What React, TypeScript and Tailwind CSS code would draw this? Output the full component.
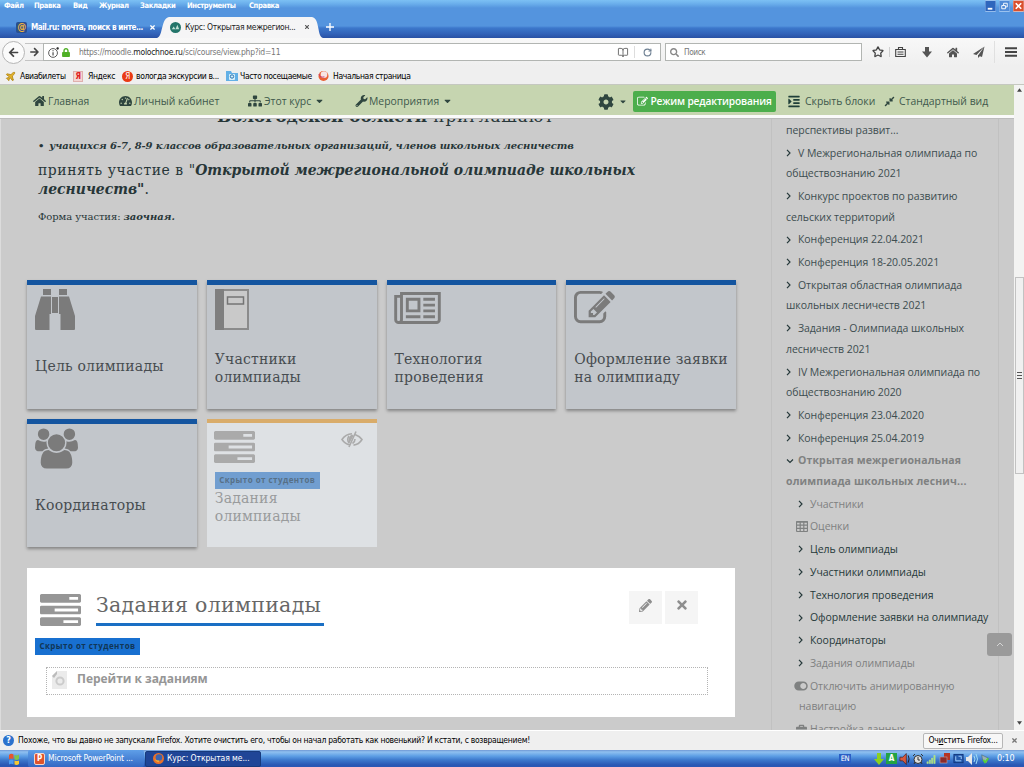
import React from 'react';
import { FaHome, FaTachometerAlt, FaSitemap, FaWrench, FaCog, FaIndent, FaCompressAlt, FaLock, FaArrowLeft, FaArrowRight, FaSearch, FaToggleOn, FaPencilAlt, FaTimes, FaCaretDown, FaBriefcase } from 'react-icons/fa';
import { Star, BookOpen, RotateCw, Plane } from 'lucide-react';

interface IconProps {
  className?: string;
}

interface Course {
  lines: string[];
}

interface Section {
  title: string;
  muted?: boolean;
}

const EDIT_PATH =
  'M888 1184l116-116-152-152-116 116v56h96v96h56zm440-720q-16-16-33 1l-350 350q-17 17-1 33t33-1l350-350q17-17 1-33zm80 594v190q0 119-84.5 203.5t-203.5 84.5h-832q-119 0-203.5-84.5t-84.5-203.5v-832q0-119 84.5-203.5t203.5-84.5h832q63 0 117 25 15 7 18 23 3 17-9 29l-49 49q-14 14-32 8-23-6-45-6h-832q-66 0-113 47t-47 113v832q0 66 47 113t113 47h832q66 0 113-47t47-113v-126q0-13 9-22l64-64q15-15 35-7t20 29zm-96-738l288 288-672 672h-288v-288zm444 132l-92 92-288-288 92-92q28-28 68-28t68 28l152 152q28 28 28 68t-28 68z';

const EditIcon: React.FC<IconProps> = ({ className }) => (
  <svg viewBox="0 0 1792 1792" fill="currentColor" className={className}>
    <path d={EDIT_PATH} />
  </svg>
);

const TasksIcon: React.FC<IconProps> = ({ className }) => (
  <svg viewBox="0 128 1792 1408" preserveAspectRatio="none" fill="currentColor" className={className}>
    <path d="M1024 1408h640v-128h-640v128zm-384-512h1024v-128h-1024v128zm640-512h384v-128h-384v128zm512 832v256q0 26-19 45t-45 19h-1664q-26 0-45-19t-19-45v-256q0-26 19-45t45-19h1664q26 0 45 19t19 45zm0-512v256q0 26-19 45t-45 19h-1664q-26 0-45-19t-19-45v-256q0-26 19-45t45-19h1664q26 0 45 19t19 45zm0-512v256q0 26-19 45t-45 19h-1664q-26 0-45-19t-19-45v-256q0-26 19-45t45-19h1664q26 0 45 19t19 45z" />
  </svg>
);

const UsersIcon: React.FC<IconProps> = ({ className }) => (
  <svg viewBox="-64 0 1920 1792" fill="currentColor" className={className}>
    <path d="M529 896q-162 5-265 128h-134q-82 0-138-40.500t-56-118.500q0-353 124-353 6 0 43.500 21t97.500 42.500 119 21.500q67 0 133-23-5 37-5 66 0 139 81 256zm1071 637q0 120-73 189.500t-194 69.500h-874q-121 0-194-69.500t-73-189.500q0-53 3.500-103.500t14-109 26.500-108.500 43-97.500 62-81 85.500-53.500 111.500-20q10 0 43 21.500t73 48 107 48 135 21.500 135-21.500 107-48 73-48 43-21.500q61 0 111.500 20t85.500 53.500 62 81 43 97.500 26.500 108.500 14 109 3.500 103.500zm-1024-1277q0 106-75 181t-181 75-181-75-75-181 75-181 181-75 181 75 75 181zm704 384q0 159-112.500 271.500t-271.500 112.500-271.500-112.500-112.500-271.500 112.500-271.500 271.500-112.500 271.500 112.500 112.500 271.500zm576 225q0 78-56 118.500t-138 40.500h-134q-103-123-265-128 81-117 81-256 0-29-5-66 66 23 133 23 59 0 119-21.500t97.500-42.500 43.500-21q124 0 124 353zm-128-609q0 106-75 181t-181 75-181-75-75-181 75-181 181-75 181 75 75 181z" />
  </svg>
);

const NewspaperIcon: React.FC<IconProps> = ({ className }) => (
  <svg viewBox="0 128 2048 1408" fill="currentColor" className={className}>
    <path d="M1024 512h-384v384h384v-384zm128 640v128h-640v-128h640zm0-768v640h-640v-640h640zm640 768v128h-512v-128h512zm0-256v128h-512v-128h512zm0-256v128h-512v-128h512zm0-256v128h-512v-128h512zm-1536 960v-960h-128v960q0 26 19 45t45 19 45-19 19-45zm1664 0v-1088h-1536v1088q0 33-11 64h1483q26 0 45-19t19-45zm128-1216v1216q0 80-56 136t-136 56h-1664q-80 0-136-56t-56-136v-1088h256v-128h1792z" />
  </svg>
);

const BinocularsIcon: React.FC<IconProps> = ({ className }) => (
  <svg viewBox="0 0 40 41" fill="currentColor" className={className}>
    <path d="M8 0h8v6H8zM24 0h8v6h-8zM17 8h6v16h-6zM6 7.500h10V25h-1.500v16H1q-1 0-1-1V27zM34 7.500H24V25h1.500v16H39q1 0 1-1V27z" />
  </svg>
);

const BookIcon: React.FC<IconProps> = ({ className }) => (
  <svg viewBox="0 0 34 41" className={className}>
    <rect x="1" y="1" width="32" height="39" fill="#c9c9c9" stroke="#8b8b8b" strokeWidth="2" />
    <path d="M0 0h9v41H0z" fill="#7f7f7f" />
    <rect x="12.500" y="8" width="16" height="7" fill="none" stroke="#747474" strokeWidth="1.500" />
  </svg>
);

const EyeSlashIcon: React.FC<IconProps> = ({ className }) => (
  <svg viewBox="0 0 22 17" fill="none" stroke="currentColor" strokeWidth="1.600" className={className}>
    <path d="M9 14Q4 13 1 8.500 4.500 3 11 2.700M14 3.500q4.500 1.500 7 5-3 5-8.500 5.600M8 12Q5.500 8.500 8 5M14 8q0 3-2.500 4.500M15 .5L8 16" />
    <path d="M11 4.500Q8 6 8.500 10.500L11.500 5z" fill="currentColor" />
  </svg>
);

const TableIcon: React.FC<IconProps> = ({ className }) => (
  <svg viewBox="0 0 12 11" fill="none" stroke="currentColor" strokeWidth="1.200" className={className}>
    <rect x=".5" y=".5" width="11" height="10" rx="1" />
    <path d="M0 1.200h12M0 4.200h12M0 7.300h12M4.200 1v10M7.800 1v10" />
  </svg>
);

const MENU = [
  { label: 'Файл', width: 'w-[30px]' },
  { label: 'Правка', width: 'w-[39px]' },
  { label: 'Вид', width: 'w-[26px]' },
  { label: 'Журнал', width: 'w-[41px]' },
  { label: 'Закладки', width: 'w-[47px]' },
  { label: 'Инструменты', width: 'w-[62px]' },
  { label: 'Справка', width: 'w-[40px]' },
];

const COURSES: Course[] = [
  { lines: ['V Межрегиональная олимпиада по', 'обществознанию 2021'] },
  { lines: ['Конкурс проектов по развитию', 'сельских территорий'] },
  { lines: ['Конференция 22.04.2021'] },
  { lines: ['Конференция 18-20.05.2021'] },
  { lines: ['Открытая областная олимпиада', 'школьных лесничеств 2021'] },
  { lines: ['Задания - Олимпиада школьных', 'лесничеств 2021'] },
  { lines: ['IV Межрегиональная олимпиада по', 'обществознанию 2020'] },
  { lines: ['Конференция 23.04.2020'] },
  { lines: ['Конференция 25.04.2019'] },
];

const SECTIONS: Section[] = [
  { title: 'Цель олимпиады' },
  { title: 'Участники олимпиады' },
  { title: 'Технология проведения' },
  { title: 'Оформление заявки на олимпиаду' },
  { title: 'Координаторы' },
  { title: 'Задания олимпиады', muted: true },
];

const Chevron: React.FC<{ down?: boolean }> = ({ down }) => (
  <svg viewBox="0 0 8 8" fill="none" stroke="#26393a" strokeWidth="1.200" className="w-[8px] h-[8px] shrink-0">
    {down ? <path d="M1 2.500l3 3 3-3" /> : <path d="M1 .8l3 3.200-3 3.200" />}
  </svg>
);

const BrowserChrome: React.FC = () => (
  <header className="font-['DejaVu_Sans_Condensed','DejaVu_Sans',sans-serif] text-[8.5px] tracking-[-0.25px]">
    <div className="h-[38px] bg-[linear-gradient(#7cc0f4_0px,#69adeb_4px,#5494de_8px,#5494de_26px,#3c77cb_28px,#3262b8_34px,#2951a4_38px)] flex flex-col">
      <div className="h-[16px] flex justify-between">
        <div className="flex pl-[4px] h-[12px] items-center text-white font-bold text-[7.6px] tracking-[-0.4px]">
          {MENU.map(item => (
            <span key={item.label} className={`${item.width} whitespace-nowrap`}>{item.label}</span>
          ))}
        </div>
        <div className="flex gap-[3px] h-[12px] text-white">
          <svg viewBox="0 0 12 12" className="w-[11px] h-[12px]"><rect width="12" height="12" rx="1" fill="#2e66bd" stroke="#b7d4f7" strokeWidth=".8" /><path d="M3 9h5" stroke="#fff" strokeWidth="2" /></svg>
          <svg viewBox="0 0 12 12" className="w-[11px] h-[12px]" fill="none" stroke="#fff"><rect width="12" height="12" rx="1" fill="#4e89d6" stroke="#b7d4f7" strokeWidth=".8" /><path d="M5 5V3h4v4H7M3 5.500h4V9H3z" /></svg>
          <svg viewBox="0 0 12 12" className="w-[11px] h-[12px]"><rect width="12" height="12" rx="1" fill="#d9502f" stroke="#f3cabd" strokeWidth=".8" /><path d="M3 3l6 6M9 3L3 9" stroke="#fff" strokeWidth="1.800" /></svg>
        </div>
      </div>
      <div className="h-[22px] flex">
        <div className="w-[157px] flex items-center pl-[16px] text-white font-bold">
          <span className="w-[11px] h-[11px] rounded-[2px] bg-[#2a4f8f] text-[#f0b23d] text-[10px] leading-[10px] text-center shrink-0">@</span>
          <span className="ml-[4px] w-[118px] text-[8.1px] tracking-[-0.43px] whitespace-nowrap">Mail.ru: почта, поиск в инте...</span>
          <FaTimes className="w-[7px] h-[7px] shrink-0" />
        </div>
        <div className="relative w-[166px] h-full">
          <svg viewBox="0 0 166 22" className="absolute inset-0 w-full h-full"><path d="M0 22C6 21 4 2 12 1h143c8 1 5 20 11 21z" fill="#f5f5f6" /></svg>
          <div className="relative h-full flex items-center pl-[13px] text-[#222]">
            <svg viewBox="0 0 12 12" className="w-[11px] h-[11px] shrink-0"><circle cx="6" cy="6" r="6" fill="#23756a" /><path d="M2 8l2-3 2 3 2-5 2 5z" fill="#bfe0d5" /></svg>
            <span className="ml-[4px] w-[119px] whitespace-nowrap tracking-[-0.32px]">Курс: Открытая межрегион...</span>
            <FaTimes className="w-[6px] h-[6px] text-[#555]" />
          </div>
        </div>
        <svg viewBox="0 0 9 9" className="w-[8px] h-[8px] ml-[3px] mt-[7px]"><path d="M4.500 0v9M0 4.500h9" stroke="#fff" strokeWidth="1.500" /></svg>
      </div>
    </div>

    <div className="h-[28px] bg-gradient-to-b from-[#f8f8f8] to-[#efefef] flex items-center text-[#444]">
      <div className="w-[23px] h-[23px] ml-[2px] rounded-full border border-[#b5b5b5] bg-[#fbfbfb] flex items-center justify-center shrink-0">
        <FaArrowLeft className="w-[11px] h-[11px]" />
      </div>
      <div className="w-[18px] h-[18px] border-y border-[#c4c4c4] flex items-center justify-center"><FaArrowRight className="w-[9px] h-[10px]" /></div>
      <div className="h-[18px] w-[618px] bg-white border border-[#b2b5b2] flex items-center">
        <svg viewBox="0 0 12 12" className="w-[11px] h-[11px] ml-[4px]" fill="none" stroke="#4b4b4b"><circle cx="5.500" cy="6.500" r="4.800" /><path d="M5.500 5.800v3.500M5.500 3.500v1" strokeWidth="1.300" /><circle cx="10.500" cy="1.500" r="1" fill="#222" /></svg>
        <FaLock className="w-[8px] h-[9px] ml-[3px] text-[#4faf25]" />
        <span className="ml-[9px] w-[538px] text-[8.5px] tracking-[-0.27px] text-[#777] whitespace-nowrap">https://moodle.<span className="text-[#222]">molochnoe.ru</span>/sci/course/view.php?id=11</span>
        <BookOpen className="w-[12px] h-[11px] text-[#666]" strokeWidth={2} />
        <span className="h-[12px] w-px bg-[#ddd] ml-[5px] mr-[8px]" />
        <RotateCw className="w-[9px] h-[9px] text-[#6d7f92]" strokeWidth={3} />
      </div>
      <div className="h-[18px] w-[197px] ml-[4px] bg-white border border-[#b2b5b2] flex items-center">
        <FaSearch className="w-[9px] h-[9px] ml-[4px] text-[#888]" />
        <span className="ml-[5px] text-[#777] text-[8.2px] tracking-[-0.4px]">Поиск</span>
      </div>
      <Star className="w-[12px] h-[12px] ml-[10px] shrink-0" strokeWidth={2.6} />
      <span className="h-[10px] w-px bg-[#d0d0d0] ml-[5px] mr-[5px]" />
      <svg viewBox="0 0 11 12" className="w-[11px] h-[12px]" fill="none" stroke="#444" strokeWidth="1.100"><path d="M.7 3.500h9.600v7H.7zM3.500 3V1.500h4V3M2.500 6h6M2.500 8.200h6" /></svg>
      <svg viewBox="0 0 10 12" className="w-[10px] h-[12px] ml-[16px]" fill="#555"><path d="M3 1h4v4.500h3l-5 6-5-6h3z" /></svg>
      <FaHome className="w-[12px] h-[11px] ml-[15px] text-[#555]" />
      <svg viewBox="0 0 12 12" className="w-[12px] h-[12px] ml-[14px]"><path d="M11.500.5L0 8l3.500 1zM11.500.5L5 9.500l4 1.500zM5 9v3l2-2z" fill="#555" /></svg>
      <span className="h-[22px] w-px bg-[#e0e0e0] ml-[9px]" />
      <svg viewBox="0 0 12 10" className="w-[12px] h-[10px] ml-[10px]"><path d="M0 1.200h12M0 5h12M0 8.800h12" stroke="#444" strokeWidth="2" /></svg>
    </div>

    <div className="h-[19px] bg-[#efefef] border-b border-[#c5c8c0] flex items-center pt-[2px] text-black whitespace-nowrap tracking-[-0.35px]">
      <Plane className="w-[11px] h-[11px] ml-[5px] text-[#b48a1c] fill-[#e3b22a]" />
      <span className="ml-[4px] w-[53px]">Авиабилеты</span>
      <span className="w-[10px] h-[11px] bg-[#f3d5d3] border border-[#dfb0ad] text-[#e02020] font-bold text-[8px] leading-[9px] text-center">Я</span>
      <span className="ml-[5px] w-[34px]">Яндекс</span>
      <span className="w-[11px] h-[11px] rounded-full bg-[#ea3a14] text-white text-[8px] leading-[11px] text-center">Я</span>
      <span className="ml-[3px] w-[90px]">вологда экскурсии в...</span>
      <svg viewBox="0 0 12 12" className="w-[12px] h-[12px]"><path d="M0 1h5l1 2h6v8H0z" fill="#63b0e6" /><rect x="3" y="4" width="6" height="6" rx="1" fill="#d8effb" /><circle cx="6" cy="6.500" r="1.700" fill="none" stroke="#2571ae" /></svg>
      <span className="ml-[2px] w-[78px]">Часто посещаемые</span>
      <svg viewBox="0 0 12 12" className="w-[11px] h-[12px]"><circle cx="6" cy="6" r="5.500" fill="#ea5f33" /><circle cx="6.500" cy="4.500" r="3.600" fill="#f7e4e4" /><path d="M1 4q1 4 6 3" stroke="#c23770" fill="none" /></svg>
      <span className="ml-[4px]">Начальная страница</span>
    </div>
  </header>
);

const GreenNav: React.FC = () => (
  <nav className="h-[30px] bg-[#c6d5b0] flex items-center pl-[33px] pt-[3px] text-[#40584c] text-[10.400px] tracking-[0px] whitespace-nowrap">
    <a className="w-[86px] flex items-center gap-[2px]"><FaHome className="w-[13px] h-[12px] text-[#2f463f]" />Главная</a>
    <a className="w-[129px] flex items-center gap-[2px]"><FaTachometerAlt className="w-[13px] h-[12px] text-[#2f463f]" />Личный кабинет</a>
    <a className="w-[107px] flex items-center gap-[2px]"><FaSitemap className="w-[14px] h-[12px] text-[#2f463f]" />Этот курс<FaCaretDown className="w-[9px] h-[10px] ml-[2px] text-[#2f463f]" /></a>
    <a className="w-[243px] flex items-center gap-[1px]"><FaWrench className="w-[13px] h-[12px] text-[#2f463f]" />Мероприятия<FaCaretDown className="w-[9px] h-[10px] ml-[3px] text-[#2f463f]" /></a>
    <a className="w-[35px] flex items-center"><FaCog className="w-[16px] h-[16px] text-[#2f463f]" /><FaCaretDown className="w-[8px] h-[9px] ml-[5px] text-[#2f463f]" /></a>
    <button className="w-[143px] h-[21px] bg-[#4cae4c] rounded-[2px] text-white font-semibold text-[10.2px] flex items-center justify-center gap-[2px] tracking-[-0.15px]">
      <EditIcon className="w-[11px] h-[11px]" />Режим редактирования
    </button>
    <a className="ml-[11px] w-[97px] flex items-center gap-[4px]"><FaIndent className="w-[14px] h-[13px] text-[#1f3f39]" />Скрыть блоки</a>
    <a className="flex items-center gap-[4px]"><FaCompressAlt className="w-[11px] h-[11px] text-[#2f463f]" />Стандартный вид</a>
  </nav>
);

interface TileProps {
  title: string[];
  icon: React.ReactNode;
}

const Tile: React.FC<TileProps> = ({ title, icon }) => (
  <div className="h-[128.500px] bg-[#c2c6cb] border-t-[5px] border-[#1455a0] shadow-[0_2px_3px_rgba(0,0,0,0.35)] pl-[8px] pt-[4px] text-[#7b7b7b]">
    <div className="h-[61px] flow-root">{icon}</div>
    <h4 className={`font-['DejaVu_Serif',serif] text-[14px] leading-[18px] tracking-[0.2px] text-[#474c50] whitespace-nowrap ${title.length === 1 ? 'pt-[7px]' : ''}`}>
      {title.map(line => <span key={line} className="block">{line}</span>)}
    </h4>
  </div>
);

const HiddenBadge: React.FC<{ faded?: boolean }> = ({ faded }) => (
  <div className={`w-[105px] h-[17px] flex items-center justify-center font-bold text-[8px] tracking-[0.45px] whitespace-nowrap ${faded ? 'bg-[#719ed0] text-[#577087]' : 'bg-[#1870d0] text-[#113656]'}`}>
    Скрыто от студентов
  </div>
);

const MainColumn: React.FC = () => (
  <main className="w-[771px] shrink-0 pl-[26px] border-l border-l-[#dcdcdc] overflow-hidden">
    <section className="pl-[11px] h-[161px] font-['DejaVu_Serif',serif] text-[#273638] whitespace-nowrap overflow-hidden">
      <p className="text-[16.800px] leading-[20px] mt-[-13px] ml-[179px] tracking-[0.9px]"><b className="tracking-[-0.05px]">Вологодской области</b> приглашают</p>
      <p className="mt-[12px] text-[10px] leading-[16px] tracking-[-0.1px]"><b>•</b><b className="italic ml-[5px]">учащихся 6-7, 8-9 классов образовательных организаций, членов школьных лесничеств</b></p>
      <p className="mt-[7px] font-['DejaVu_Serif_Condensed','DejaVu_Serif',serif] text-[15.500px] leading-[18.700px] tracking-[0px]"><span className="tracking-[0.55px]">принять участие в </span><i>"<b>Открытой межрегиональной олимпиаде школьных</b></i><br /><b className="italic">лесничеств"</b>.</p>
      <p className="mt-[10.500px] text-[10px] leading-[16px] tracking-[-0.08px]">Форма участия: <b className="italic">заочная.</b></p>
    </section>

    <section className="w-[709px] grid grid-cols-4 gap-[10px]">
      <Tile title={['Цель олимпиады']} icon={<BinocularsIcon className="w-[40px] h-[41px]" />} />
      <Tile title={['Участники', 'олимпиады']} icon={<BookIcon className="w-[34px] h-[41px]" />} />
      <Tile title={['Технология', 'проведения']} icon={<NewspaperIcon className="w-[47px] h-[32px] mt-[3px] ml-[-1px]" />} />
      <Tile title={['Оформление заявки', 'на олимпиаду']} icon={<EditIcon className="w-[41px] h-[41px] mt-[-1px]" />} />
      <Tile title={['Координаторы']} icon={<UsersIcon className="w-[43px] h-[41px]" />} />
      <div className="h-[128.500px] bg-[#dee1e4] border-t-[4px] border-[#d9ac6a] pl-[7px] pt-[8px] text-[#aaa]">
        <div className="flex justify-between pr-[14px]">
          <TasksIcon className="w-[41px] h-[32px]" />
          <EyeSlashIcon className="w-[22px] h-[17px]" />
        </div>
        <div className="mt-[9px] ml-px"><HiddenBadge faded /></div>
        <h4 className="ml-px font-['DejaVu_Serif',serif] text-[14px] leading-[18px] tracking-[0.2px] text-[#999b9c]">Задания<br />олимпиады</h4>
      </div>
    </section>

    <section className="w-[708px] h-[149px] mt-[21px] bg-white pt-[22.500px]">
      <div className="flex pl-[13px]">
        <TasksIcon className="w-[41px] h-[32px] mt-[3px] text-[#969696]" />
        <h2 className="w-[228px] h-[35px] ml-[15px] border-b-[3px] border-[#1a6fc4] font-['DejaVu_Serif',serif] text-[20.500px] leading-[28px] tracking-[0.3px] text-[#676767] whitespace-nowrap">Задания олимпиады</h2>
        <div className="flex gap-[3px] ml-[305px] text-[#8e8e8e]">
          <button className="w-[33px] h-[33px] bg-[#f5f5f5] flex items-center justify-center pb-[4px]"><FaPencilAlt className="w-[13px] h-[13px]" /></button>
          <button className="w-[33px] h-[33px] bg-[#f5f5f5] flex items-center justify-center pb-[4px]"><FaTimes className="w-[12px] h-[14px]" /></button>
        </div>
      </div>
      <div className="mt-[12px] ml-[8px]"><HiddenBadge /></div>
      <div className="w-[662px] h-[28px] ml-[19px] mt-[12px] border border-dotted border-[#b4b4b4] flex items-start pl-[5px]">
        <svg viewBox="0 0 15 18" className="w-[15px] h-[18px] mt-[3px]"><path d="M0 5L5 0h10v18H0z" fill="#ebebeb" /><path d="M0 5L5 0v3L2 7z" fill="#bbb" /><circle cx="8" cy="10" r="3.600" fill="none" stroke="#cbcbcb" strokeWidth="2" /></svg>
        <span className="ml-[10px] mt-[1px] text-[12px] leading-[20px] font-bold text-[#969696] tracking-[-0.03px]">Перейти к заданиям</span>
      </div>
    </section>
  </main>
);

const Sidebar: React.FC = () => (
  <aside className="w-[228px] shrink-0 h-full border-x border-[#c1c1c1] pl-[14px] pt-[1px] text-[10.500px] leading-[20.600px] tracking-[-0.05px] text-[#3d4d50] whitespace-nowrap overflow-hidden">
    <div>перспективы развит...</div>
    {COURSES.map(course => (
      <div key={course.lines[0]} className="mt-[2.150px]">
        <div className="flex items-center gap-[4px]"><Chevron /><span>{course.lines[0]}</span></div>
        {course.lines[1] && <div>{course.lines[1]}</div>}
      </div>
    ))}
    <div className="mt-[2.150px] font-bold text-[#7f8181] tracking-[0.15px]">
      <div className="flex items-center gap-[4px]"><Chevron down /><span>Открытая межрегиональная</span></div>
      <div>олимпиада школьных леснич...</div>
    </div>
    <div className="mt-[2.150px] pl-[12px] flex items-center gap-[4px] text-[#7f8181]"><Chevron /><span>Участники</span></div>
    <div className="mt-[2.150px] pl-[10px] flex items-center gap-[2px] text-[#7f8181]"><TableIcon className="w-[12px] h-[11px]" /><span>Оценки</span></div>
    {SECTIONS.map(section => (
      <div key={section.title} className={`mt-[2.150px] pl-[12px] flex items-center gap-[4px] ${section.muted ? 'text-[#7f8181]' : 'text-[#26393a]'}`}>
        <Chevron /><span>{section.title}</span>
      </div>
    ))}
    <div className="mt-[2.150px] text-[#7f8181]">
      <div className="pl-[8px] flex items-center gap-[2px]"><FaToggleOn className="w-[14px] h-[12px]" /><span>Отключить анимированную</span></div>
      <div className="pl-[13px]">навигацию</div>
    </div>
    <div className="mt-[2.150px] pl-[10px] flex items-center gap-[3px] text-[#7f8181]"><FaBriefcase className="w-[11px] h-[11px]" /><span>Настройка данных</span></div>
  </aside>
);

const Scrollbar: React.FC = () => (
  <div className="w-[10px] bg-[#f3f3f2] flex flex-col items-center">
    <svg viewBox="0 0 6 4" className="w-[5px] h-[4px] mt-[3px]"><path d="M0 4l3-4 3 4z" fill="#444" /></svg>
    <div className="w-[9px] h-[197px] mt-[185px] bg-[#f0f0f0] border border-[#c2c2c2] flex items-center justify-center">
      <svg viewBox="0 0 5 7" className="w-[5px] h-[7px]"><path d="M0 .5h5M0 3.500h5M0 6.500h5" stroke="#555" /></svg>
    </div>
    <svg viewBox="0 0 6 4" className="w-[5px] h-[4px] mt-auto mb-[5px]"><path d="M0 0l3 4 3-4z" fill="#444" /></svg>
  </div>
);

const Taskbar: React.FC = () => (
  <footer className="font-['DejaVu_Sans_Condensed','DejaVu_Sans',sans-serif] text-[8.5px] tracking-[-0.3px]">
    <div className="h-[20px] bg-[#efefef] border-t border-white flex items-center text-black whitespace-nowrap">
      <span className="w-[11px] h-[11px] ml-[3px] rounded-full bg-[#2b72cd] text-white font-bold text-[9px] leading-[11px] text-center">?</span>
      <span className="ml-[4px] w-[904px] tracking-[-0.27px]">Похоже, что вы давно не запускали Firefox. Хотите очистить его, чтобы он начал работать как новенький? И кстати, с возвращением!</span>
      <button className="w-[80px] h-[16px] ml-[1px] border border-[#b7b7b7] bg-[#f7f7f7] rounded-[2px] shrink-0 tracking-[-0.2px]">Оч<u>и</u>стить Firefox...</button>
      <FaTimes className="w-[7px] h-[7px] ml-[8px] text-[#777]" />
    </div>
    <div className="h-[17px] bg-[linear-gradient(#6f97d4_0px,#8fc0f0_2px,#5e9fe5_6px,#3c78cc_10px,#2a57b4_15px)] flex items-center text-white whitespace-nowrap">
      <div className="w-[28px] flex justify-center items-center">
        <svg viewBox="0 0 12 12" className="w-[12px] h-[12px]"><path d="M1 2q2-2 4.500-.5V6Q3 5 1 6.500z" fill="#e8552b" /><path d="M6.500 2Q9 3 11 1.500V6q-2 1.500-4.500.5z" fill="#7fc54a" /><path d="M1 7.500Q3 6 5.500 7v4.500Q3 10 1 11.500z" fill="#4b9bf0" /><path d="M6.500 7.500q2.500 1 4.500 0V11q-2 1.500-4.500.5z" fill="#f7c933" /></svg>
      </div>
      <div className="w-[116px] h-[17px] bg-gradient-to-b from-[#5f9fe8] to-[#3468c4] rounded-[2px] flex items-center pl-[6px] gap-[3px]">
        <span className="w-[11px] h-[12px] bg-[#e0532c] border border-[#f5d6c9] rounded-[2px] text-[8px] leading-[9px] font-bold text-center">P</span>
        <span className="tracking-[-0.17px]">Microsoft PowerPoint ...</span>
      </div>
      <div className="w-[116px] h-[16px] ml-[1px] bg-[#1f4597] border border-[#173a7d] rounded-[2px] flex items-center pl-[7px] gap-[3px]">
        <svg viewBox="0 0 12 12" className="w-[11px] h-[11px]"><circle cx="6" cy="6" r="6" fill="#e8702a" /><circle cx="6.500" cy="5" r="3.600" fill="#3c64b0" /><path d="M1 4q1 5 6 4l-1 2Q2 9 1 4z" fill="#f7b733" /></svg>
        <span className="tracking-[-0.07px]">Курс: Открытая ме...</span>
      </div>
      <span className="ml-auto mr-[5px] w-[12px] h-[9px] bg-[#2b5fc6] text-[7.500px] leading-[9px] text-center">EN</span>
      <div className="flex items-center gap-[2px] ml-[18px] w-[118px]">
        <svg viewBox="0 0 10 12" className="w-[10px] h-[12px]"><path d="M3 0h4v6h3l-5 6-5-6h3z" fill="#8bd01f" /></svg>
        <span className="w-[11px] h-[11px] bg-[#24a344] font-bold text-[8px] leading-[11px] text-center">A</span>
        <svg viewBox="0 0 12 12" className="w-[11px] h-[12px]"><path d="M1 4h3l4-4v12L4 8H1z" fill="#d9593d" stroke="#3b1818" strokeWidth=".7" /><path d="M10 2q2 4 0 8" stroke="#241414" fill="none" /></svg>
        <svg viewBox="0 0 12 12" className="w-[12px] h-[12px]" fill="#ddd" stroke="#333"><circle cx="6" cy="6.500" r="4" /><path d="M1 3l2-2M11 3L9 1M2 11l1-2M10 11L9 9M6 4v3h2" /></svg>
        <svg viewBox="0 0 12 12" className="w-[11px] h-[12px]"><path d="M1 9h1.500v2H1zM3.500 7H5v4H3.500zM6 5h1.500v6H6zM8.500 2H10v9H8.500z" fill="#a8e869" stroke="#bfe5a0" strokeWidth=".5" /></svg>
        <svg viewBox="0 0 12 12" className="w-[12px] h-[12px]"><rect x="5" width="6" height="7" fill="#b63423" /><rect x="1" y="4" width="7" height="6" fill="#8c2c2b" stroke="#c8a0a0" strokeWidth=".6" /></svg>
        <svg viewBox="0 0 12 12" className="w-[11px] h-[12px]"><rect x="1" y="1" width="10" height="9" fill="#255bae" stroke="#11357b" /><path d="M3 3v5h6M6 3h3v3" stroke="#a9d3ff" fill="none" /></svg>
        <svg viewBox="0 0 12 12" className="w-[12px] h-[12px]"><path d="M0 4h2l4-4v12L2 8H0z" fill="#e8e8e8" /><path d="M8 3q2 3 0 6M10 1q3 5 0 10" stroke="#9edcf5" fill="none" /></svg>
        <svg viewBox="0 0 12 12" className="w-[10px] h-[12px]"><path d="M2 1l8 4-2 6-5-4z" fill="#9bb1b5" stroke="#3f5f69" strokeWidth=".6" /><path d="M4 7l2 3 4-5" stroke="#58d431" strokeWidth="2" fill="none" /></svg>
      </div>
      <span className="w-[32px] pl-[5px] text-[9px] tracking-[-0.2px]">0:10</span>
    </div>
  </footer>
);

const App: React.FC = () => (
  <div className="w-[1024px] h-[767px] overflow-hidden flex flex-col font-['Open_Sans','Noto_Sans',sans-serif] bg-[#cbcbcb]">
    <BrowserChrome />
    <div className="flex h-[645px]">
      <div className="relative w-[1014px] h-[645px] overflow-hidden">
        <GreenNav />
        <div className="h-[3px] bg-[#fafafa]" />
        <div className="flex h-[612px] border-t border-[#bcbcbc] overflow-hidden">
          <MainColumn />
          <Sidebar />
        </div>
        <button className="absolute left-[987px] top-[548px] w-[25px] h-[23px] rounded-[3px] bg-[#9a9a9a] flex items-center justify-center">
          <svg viewBox="0 0 8 5" className="w-[8px] h-[5px]"><path d="M1 4l3-3 3 3" stroke="#d5d5d5" fill="none" /></svg>
        </button>
      </div>
      <Scrollbar />
    </div>
    <Taskbar />
  </div>
);

export default App;
